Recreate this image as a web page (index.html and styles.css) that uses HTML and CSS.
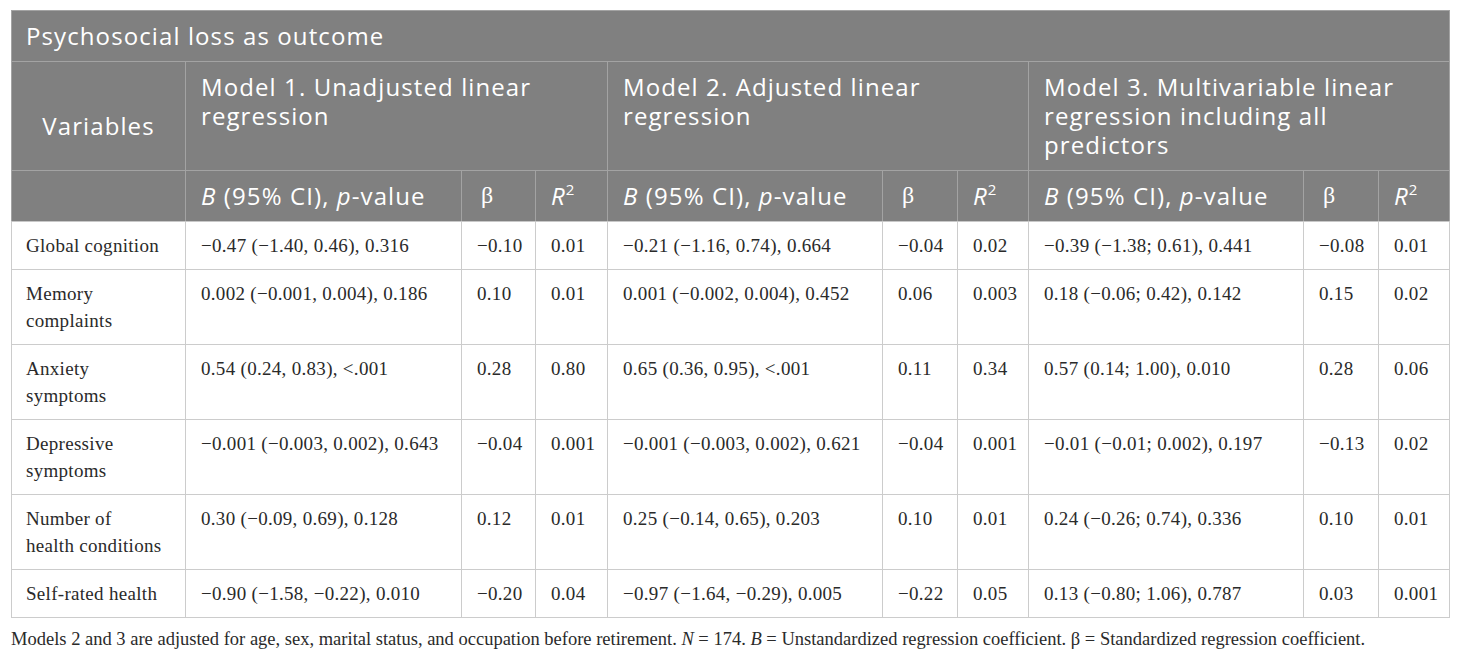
FILE: index.html
```html
<!DOCTYPE html>
<html lang="en">
<head>
<meta charset="utf-8">
<title>Psychosocial loss as outcome</title>
<link rel="stylesheet" href="styles.css">
</head>
<body>
<div class="page">
<table class="data">
  <colgroup>
    <col class="c-var">
    <col class="c-b1"><col class="c-beta"><col class="c-r">
    <col class="c-b"><col class="c-beta2"><col class="c-r2">
    <col class="c-b"><col class="c-beta2"><col class="c-r2">
  </colgroup>
  <thead>
    <tr><th class="title" colspan="10">Psychosocial loss as outcome</th></tr>
    <tr class="models">
      <th class="var">Variables</th>
      <th colspan="3">Model 1. Unadjusted linear regression</th>
      <th colspan="3">Model 2. Adjusted linear regression</th>
      <th colspan="3">Model 3. Multivariable linear regression including all predictors</th>
    </tr>
    <tr class="stats">
      <th></th>
      <th><i>B</i> (95% CI), <i>p</i>-value</th><th class="beta">β</th><th><i>R</i><sup>2</sup></th>
      <th><i>B</i> (95% CI), <i>p</i>-value</th><th class="beta">β</th><th><i>R</i><sup>2</sup></th>
      <th><i>B</i> (95% CI), <i>p</i>-value</th><th class="beta">β</th><th><i>R</i><sup>2</sup></th>
    </tr>
  </thead>
  <tbody>
    <tr>
      <td>Global cognition</td>
      <td>−0.47 (−1.40, 0.46), 0.316</td><td>−0.10</td><td>0.01</td>
      <td>−0.21 (−1.16, 0.74), 0.664</td><td>−0.04</td><td>0.02</td>
      <td>−0.39 (−1.38; 0.61), 0.441</td><td>−0.08</td><td>0.01</td>
    </tr>
    <tr>
      <td>Memory complaints</td>
      <td>0.002 (−0.001, 0.004), 0.186</td><td>0.10</td><td>0.01</td>
      <td>0.001 (−0.002, 0.004), 0.452</td><td>0.06</td><td>0.003</td>
      <td>0.18 (−0.06; 0.42), 0.142</td><td>0.15</td><td>0.02</td>
    </tr>
    <tr>
      <td>Anxiety symptoms</td>
      <td>0.54 (0.24, 0.83), &lt;.001</td><td>0.28</td><td>0.80</td>
      <td>0.65 (0.36, 0.95), &lt;.001</td><td>0.11</td><td>0.34</td>
      <td>0.57 (0.14; 1.00), 0.010</td><td>0.28</td><td>0.06</td>
    </tr>
    <tr>
      <td>Depressive symptoms</td>
      <td>−0.001 (−0.003, 0.002), 0.643</td><td>−0.04</td><td>0.001</td>
      <td>−0.001 (−0.003, 0.002), 0.621</td><td>−0.04</td><td>0.001</td>
      <td>−0.01 (−0.01; 0.002), 0.197</td><td>−0.13</td><td>0.02</td>
    </tr>
    <tr>
      <td>Number of<br>health conditions</td>
      <td>0.30 (−0.09, 0.69), 0.128</td><td>0.12</td><td>0.01</td>
      <td>0.25 (−0.14, 0.65), 0.203</td><td>0.10</td><td>0.01</td>
      <td>0.24 (−0.26; 0.74), 0.336</td><td>0.10</td><td>0.01</td>
    </tr>
    <tr>
      <td>Self-rated health</td>
      <td>−0.90 (−1.58, −0.22), 0.010</td><td>−0.20</td><td>0.04</td>
      <td>−0.97 (−1.64, −0.29), 0.005</td><td>−0.22</td><td>0.05</td>
      <td>0.13 (−0.80; 1.06), 0.787</td><td>0.03</td><td>0.001</td>
    </tr>
  </tbody>
</table>
<p class="note">Models 2 and 3 are adjusted for age, sex, marital status, and occupation before retirement. <i>N</i> = 174. <i>B</i> = Unstandardized regression coefficient. β = Standardized regression coefficient.</p>
</div>
</body>
</html>
```

FILE: styles.css
```css
html, body {
  margin: 0;
  padding: 0;
  background: #ffffff;
}

.page {
  padding: 10px 0 0 11px;
}

.data {
  border-collapse: collapse;
  table-layout: fixed;
  width: 1438px;
  border: 1px solid #c4c4c4;
}

.c-var { width: 174px; }
.c-b1 { width: 276px; }
.c-beta { width: 74px; }
.c-r { width: 72px; }
.c-b { width: 275px; }
.c-beta2 { width: 75px; }
.c-r2 { width: 71px; }

.data th {
  background: #808080;
  color: #ffffff;
  font-family: "Open Sans", "Liberation Sans", sans-serif;
  font-weight: 400;
  font-size: 24px;
  letter-spacing: 1.1px;
  line-height: 29px;
  text-align: left;
  vertical-align: top;
  padding: 10px 15px 11px 15px;
  border: 1px solid #a3a3a3;
}

.data thead tr:last-child th {
  border-bottom: 1px solid #c8c8c8;
}

.data th.title {
  padding-left: 14px;
}

.data th.var {
  text-align: center;
  vertical-align: middle;
  padding: 29px 10px 11px 10px;
}

.data th.beta {
  font-family: "Liberation Serif", serif;
  letter-spacing: 0;
  padding-left: 19px;
}

.data th sup {
  font-size: 15px;
  letter-spacing: 0;
  line-height: 0;
  vertical-align: 10px;
}

.data td {
  font-family: "Liberation Serif", serif;
  font-size: 19px;
  letter-spacing: 0.3px;
  line-height: 27px;
  color: #2a2a2a;
  text-align: left;
  vertical-align: top;
  padding: 10px 14px 10px 15px;
  border: 1px solid #cccccc;
}

.data td:first-child {
  padding-left: 14px;
}

.note {
  margin: 8px 0 0 0;
  font-family: "Liberation Serif", serif;
  font-size: 18.5px;
  line-height: 26px;
  color: #2a2a2a;
}
```
